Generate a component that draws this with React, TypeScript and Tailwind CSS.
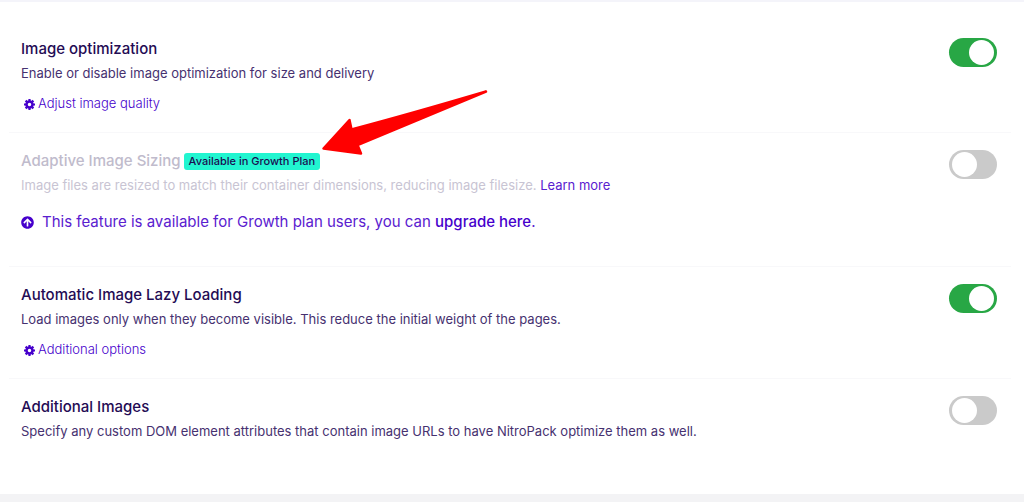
import React, { useState } from 'react';
import { FaArrowCircleUp } from 'react-icons/fa';

type SettingProps = {
  id: string;
  title: string;
  badge?: string;
  defaultOn?: boolean;
  muted?: boolean;
  description: React.ReactNode;
  children?: React.ReactNode;
};

const Setting: React.FC<SettingProps> = ({ id, title, badge, defaultOn = false, muted = false, description, children }) => {
  const [on, setOn] = useState(defaultOn);

  return (
    <section className="flex items-start justify-between gap-6 border-t border-[#f8f8fa] px-3 pt-4 pb-[19px] first:border-t-0">
      <div>
        <h2 className={`flex items-center gap-[3px] text-[15px] leading-6 font-medium ${muted ? 'text-[#c0bbcc]' : 'text-[#240b54]'}`}>
          <label htmlFor={id}>{title}</label>
          {badge && (
            <span className="rounded-[3px] bg-[#22f5d0] px-[5px] text-[11px] leading-[17px] text-[#1b0c50]">{badge}</span>
          )}
        </h2>
        <p className={`mt-0.5 text-[13px] leading-5 font-normal ${muted ? 'text-[#c8c4d3]' : 'text-[#463170]'}`}>{description}</p>
        {children}
      </div>
      <input
        id={id}
        type="checkbox"
        role="switch"
        checked={on}
        onChange={() => setOn(!on)}
        className="mt-px mr-0.5 flex h-[29px] w-12 shrink-0 cursor-pointer appearance-none items-center rounded-full bg-[#cacaca] px-[3px] before:size-[25px] before:rounded-full before:bg-white checked:justify-end checked:bg-[#28a745]"
      />
    </section>
  );
};

const GearIcon: React.FC = () => (
  <svg viewBox="0 0 22 22" className="mt-0.5 size-[11px]" aria-hidden="true">
    <circle cx="11" cy="11" r="6" fill="none" stroke="#4600cc" strokeWidth="5" />
    <path
      d="M11 0V4M11 18V22M0 11H4M18 11H22M3.2 3.2L6 6M16 16L18.8 18.8M18.8 3.2L16 6M6 16L3.2 18.8"
      stroke="#4600cc"
      strokeWidth="4.4"
    />
  </svg>
);

const OptionsLink: React.FC<{ text: string }> = ({ text }) => (
  <a href="#" className="mt-[10px] ml-[3px] flex items-center gap-[3px] text-[13px] leading-5 font-light text-[#4600cc]">
    <GearIcon />
    {text}
  </a>
);

const App: React.FC = () => {
  return (
    <div className="min-h-screen bg-[#f3f3f5] font-[Inter,sans-serif]">
      <main className="relative border-t-2 border-[#f4f4fa] bg-white px-[9px] pt-[19px] pb-[34px]">
        <div className="mr-1">
          <Setting
            id="image-optimization"
            title="Image optimization"
            defaultOn
            description="Enable or disable image optimization for size and delivery"
          >
            <OptionsLink text="Adjust image quality" />
          </Setting>
          <Setting
            id="adaptive-sizing"
            title="Adaptive Image Sizing"
            badge="Available in Growth Plan"
            muted
            description={
              <>
                Image files are resized to match their container dimensions, reducing image filesize.{' '}
                <a href="#" className="text-[#5a20cf]">Learn more</a>
              </>
            }
          >
            <p className="mt-[15px] mb-[13px] flex items-center gap-2 text-[15px] leading-6 font-normal text-[#5a20cf]">
              <FaArrowCircleUp className="size-[13px] text-[#4600cc]" />
              <span>
                This feature is available for Growth plan users, you can{' '}
                <a href="#" className="font-medium text-[#4600cc]">upgrade here</a>.
              </span>
            </p>
          </Setting>
          <Setting
            id="lazy-loading"
            title="Automatic Image Lazy Loading"
            defaultOn
            description="Load images only when they become visible. This reduce the initial weight of the pages."
          >
            <OptionsLink text="Additional options" />
          </Setting>
          <Setting
            id="additional-images"
            title="Additional Images"
            description="Specify any custom DOM element attributes that contain image URLs to have NitroPack optimize them as well."
          />
        </div>

        {/* Arrow pointing at the plan badge */}
        <svg className="pointer-events-none absolute top-[86px] left-80 h-[70px] w-[170px]" viewBox="0 0 170 70" fill="none">
          <path
            d="M3.5 60.5 L29.500 32 L31.500 41.500 Q90 26 166 3.500 Q100 31 37.500 57 L41 65.500 Z"
            fill="#ff0000"
            stroke="#ff0000"
            strokeWidth="2.5"
            strokeLinejoin="round"
          />
        </svg>
      </main>
    </div>
  );
};

export default App;
